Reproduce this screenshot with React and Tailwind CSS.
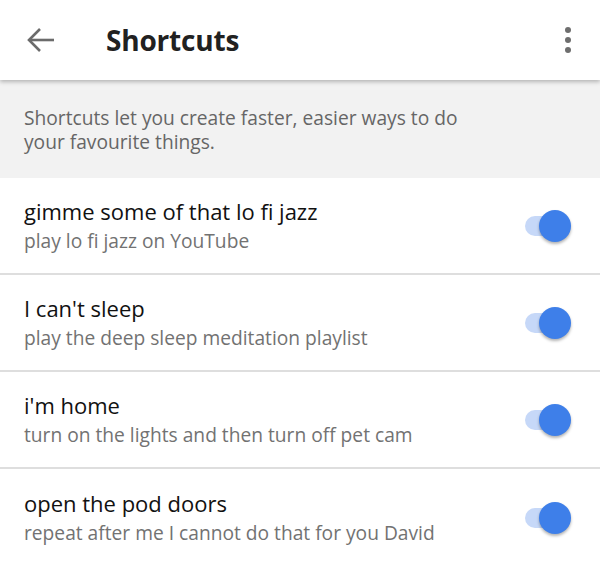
import React from "react";

const rows = [
  ["gimme some of that lo fi jazz", "play lo fi jazz on YouTube"],
  ["I can't sleep", "play the deep sleep meditation playlist"],
  ["i'm home", "turn on the lights and then turn off pet cam"],
  ["open the pod doors", "repeat after me I cannot do that for you David"],
];

function Toggle() {
  return (
    <div className="relative w-[46px] h-[34px] flex items-center shrink-0">
      <div className="w-[38px] h-[20px] rounded-full bg-[#c6d8f8]" />
      <div className="absolute right-0 top-[1px] w-[32px] h-[32px] rounded-full bg-[#3e7fe9] shadow-[0_2px_3px_rgba(0,0,0,0.3)]" />
    </div>
  );
}

export default function App() {
  return (
    <div className="w-[600px] h-[565px] bg-white overflow-hidden" style={{ fontFamily: '"Open Sans", sans-serif' }}>
      <div className="relative z-10 h-[80px] flex items-center bg-white shadow-[0_2px_4px_rgba(0,0,0,0.25)]">
        <div className="w-[106px] pl-[27px] flex items-center">
          <svg width="28" height="24" viewBox="0 0 28 24" fill="none" stroke="#6b6b6b" strokeWidth="2.6" strokeLinecap="butt">
            <path d="M2 12H27" />
            <path d="M13 1L2 12L13 23" />
          </svg>
        </div>
        <div className="flex-1 text-[28px] font-bold text-[#212121] tracking-[-0.2px]">Shortcuts</div>
        <div className="w-[64px] flex flex-col items-center gap-[4px]">
          <div className="w-[6px] h-[6px] rounded-full bg-[#6e6e6e]" />
          <div className="w-[6px] h-[6px] rounded-full bg-[#6e6e6e]" />
          <div className="w-[6px] h-[6px] rounded-full bg-[#6e6e6e]" />
        </div>
      </div>
      <div className="h-[98px] bg-[#f2f2f2] px-[24px] pt-[26px] text-[19.2px] leading-[24px] text-[#666666]">
        <p>Shortcuts let you create faster, easier ways to do</p>
        <p>your favourite things.</p>
      </div>
      {rows.map(([t, s], i) => (
        <div key={i} className={"h-[97px] flex items-center pl-[24px] pr-[29px] " + (i < 3 ? "border-b-2 border-[#dedede]" : "")}>
          <div className="flex-1 pt-[2px]">
            <div className="text-[22px] leading-[28px] text-[#111111]">{t}</div>
            <div className="text-[19.2px] leading-[32px] text-[#727272]">{s}</div>
          </div>
          <Toggle />
        </div>
      ))}
    </div>
  );
}
